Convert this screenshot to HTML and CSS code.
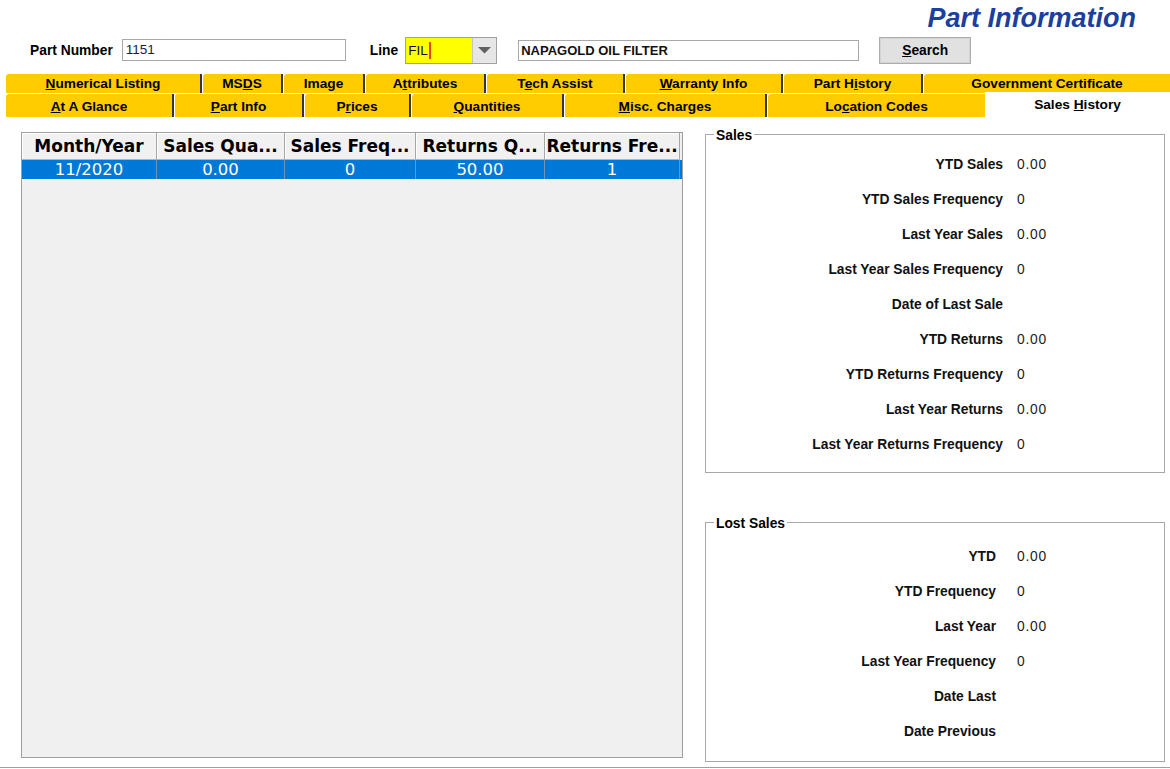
FILE: index.html
```html
<!DOCTYPE html>
<html>
<head>
<meta charset="utf-8">
<title>Part Information</title>
<link rel="stylesheet" href="styles.css">
</head>
<body>
<div class="app">
  <div class="title">Part Information</div>

  <div class="form-row">
    <span class="lbl">Part Number</span>
    <div class="field field-part">1151</div>
    <span class="lbl lbl-line">Line</span>
    <div class="combo">
      <div class="combo-field">FIL<span class="caret"></span></div>
      <div class="combo-btn">
        <svg width="13" height="7" viewBox="0 0 13 7"><path d="M0 0H13L6.5 6.5Z" fill="#606060"/></svg>
      </div>
    </div>
    <div class="field field-desc">NAPAGOLD OIL FILTER</div>
    <div class="btn"><u>S</u>earch</div>
  </div>

  <div class="tabs">
    <div class="tab-row row1">
      <div class="tab"><u>N</u>umerical Listing</div>
      <div class="tab">MS<u>D</u>S</div>
      <div class="tab">Ima<u>g</u>e</div>
      <div class="tab">A<u>t</u>tributes</div>
      <div class="tab">T<u>e</u>ch Assist</div>
      <div class="tab"><u>W</u>arranty Info</div>
      <div class="tab">Part H<u>i</u>story</div>
      <div class="tab last">Government Certificate</div>
    </div>
    <div class="tab-row row2">
      <div class="tab"><u>A</u>t A Glance</div>
      <div class="tab"><u>P</u>art Info</div>
      <div class="tab">P<u>r</u>ices</div>
      <div class="tab"><u>Q</u>uantities</div>
      <div class="tab"><u>M</u>isc. Charges</div>
      <div class="tab last">Lo<u>c</u>ation Codes</div>
      <div class="tab sel">Sales <u>H</u>istory</div>
    </div>
  </div>

  <div class="content">
    <div class="grid-table">
      <div class="thead">
        <div class="th">Month/Year</div>
        <div class="th">Sales Qua...</div>
        <div class="th">Sales Freq...</div>
        <div class="th">Returns Q...</div>
        <div class="th">Returns Fre...</div>
      </div>
      <div class="trow">
        <div class="td">11/2020</div>
        <div class="td">0.00</div>
        <div class="td">0</div>
        <div class="td">50.00</div>
        <div class="td">1</div>
      </div>
    </div>

    <div class="side">
      <fieldset class="group sales">
        <legend><span>Sales</span></legend>
        <div class="kv"><span class="k">YTD Sales</span><span class="v">0.00</span></div>
        <div class="kv"><span class="k">YTD Sales Frequency</span><span class="v">0</span></div>
        <div class="kv"><span class="k">Last Year Sales</span><span class="v">0.00</span></div>
        <div class="kv"><span class="k">Last Year Sales Frequency</span><span class="v">0</span></div>
        <div class="kv"><span class="k">Date of Last Sale</span><span class="v"></span></div>
        <div class="kv"><span class="k">YTD Returns</span><span class="v">0.00</span></div>
        <div class="kv"><span class="k">YTD Returns Frequency</span><span class="v">0</span></div>
        <div class="kv"><span class="k">Last Year Returns</span><span class="v">0.00</span></div>
        <div class="kv"><span class="k">Last Year Returns Frequency</span><span class="v">0</span></div>
      </fieldset>

      <fieldset class="group lost">
        <legend><span>Lost Sales</span></legend>
        <div class="kv"><span class="k">YTD</span><span class="v">0.00</span></div>
        <div class="kv"><span class="k">YTD Frequency</span><span class="v">0</span></div>
        <div class="kv"><span class="k">Last Year</span><span class="v">0.00</span></div>
        <div class="kv"><span class="k">Last Year Frequency</span><span class="v">0</span></div>
        <div class="kv"><span class="k">Date Last</span><span class="v"></span></div>
        <div class="kv"><span class="k">Date Previous</span><span class="v"></span></div>
      </fieldset>
    </div>
  </div>

  <div class="footer"></div>
</div>
</body>
</html>
```

FILE: styles.css
```css
body {
  margin: 0;
  background: #fff;
  font-family: "Liberation Sans", Arial, sans-serif;
  color: #000;
}

.app {
  width: 1170px;
  height: 769px;
  overflow: hidden;
}

/* Title */
.title {
  height: 30px;
  padding-top: 3px;
  padding-right: 34px;
  line-height: 30px;
  text-align: right;
  font-size: 27px;
  font-weight: bold;
  font-style: italic;
  color: #1b3fa0;
}

/* Form row */
.form-row {
  display: flex;
  align-items: center;
  height: 28px;
  margin-top: 3px;
  padding-left: 30px;
}

.lbl {
  font-weight: bold;
  font-size: 13.8px;
  white-space: nowrap;
}

.lbl-line {
  margin-left: 24px;
}

.field {
  box-sizing: border-box;
  height: 22px;
  border: 1px solid #a8a8a8;
  background: #fff;
  font-size: 13.5px;
  line-height: 20px;
  padding-left: 3px;
  white-space: nowrap;
}

.field-part {
  width: 224px;
  margin-left: 9px;
  color: #1c1c3c;
}

.field-desc {
  width: 341px;
  height: 21px;
  margin-left: 21px;
  padding-left: 2px;
  line-height: 19px;
  font-weight: bold;
  font-size: 13px;
  color: #111;
}

.combo {
  box-sizing: border-box;
  display: flex;
  width: 92px;
  height: 27px;
  margin-left: 7px;
  border: 1px solid #a0a0a0;
}

.combo-field {
  width: 64px;
  background: #ffff00;
  padding-left: 2px;
  font-size: 13.5px;
  line-height: 25px;
  color: #111;
  display: flex;
  align-items: center;
}

.caret {
  display: inline-block;
  width: 2px;
  height: 17px;
  margin-left: 1px;
  background: #e4411b;
}

.combo-btn {
  flex: 1;
  display: flex;
  align-items: center;
  justify-content: center;
  background: #e6e6e6;
  border-left: 1px solid #c4c4c4;
}

.btn {
  box-sizing: border-box;
  width: 92px;
  height: 27px;
  margin-left: 20px;
  border: 1px solid #adadad;
  box-shadow: inset 0 0 0 1px #d4d4d4;
  background: #e1e1e1;
  text-align: center;
  line-height: 25px;
  font-weight: bold;
  font-size: 13.8px;
}

/* Tabs */
.tabs {
  margin-top: 10px;
}

.tab-row {
  display: grid;
  padding-left: 6px;
}

.row1 {
  grid-template-columns: 197px 81px 82px 121px 139px 158px 140px 1fr;
  height: 19px;
}

.row2 {
  grid-template-columns: 169px 130px 107px 153px 203px 217px 1fr;
  height: 23px;
  margin-top: 1px;
}

.tab {
  box-sizing: border-box;
  margin-right: 1px;
  background: #ffcc00;
  border-right: 2px solid #353535;
  border-top-left-radius: 3px;
  text-align: center;
  font-weight: bold;
  font-size: 13.7px;
  white-space: nowrap;
  overflow: hidden;
}

.row1 .tab {
  line-height: 19px;
}

.row2 .tab {
  padding-top: 2px;
  line-height: 21px;
}

.tab.last {
  border-right: 0;
  margin-right: 0;
}

.row2 .tab.sel {
  background: #fff;
  border: 0;
  margin: -2px 0 0 0;
  padding-top: 0;
  line-height: 25px;
  border-radius: 0;
}

/* Content */
.content {
  box-sizing: border-box;
  display: flex;
  align-items: flex-start;
  height: 650px;
  padding: 9px 0 0 21px;
}

.grid-table {
  box-sizing: border-box;
  width: 662px;
  height: 626px;
  margin-top: 6px;
  border: 1px solid #a0a0a0;
  background: #f0f0f0;
}

.thead,
.trow {
  display: grid;
  grid-template-columns: 135px 128px 131px 129px 135px;
}

.thead {
  height: 27px;
}

.th {
  box-sizing: border-box;
  background: #f1f1f1;
  border-right: 1px solid #a6a6a6;
  border-bottom: 1px solid #b4b4b4;
  box-shadow: inset 1px 1px 0 #ffffff;
  font-family: "DejaVu Sans", Verdana, sans-serif;
  font-weight: bold;
  font-size: 17px;
  line-height: 27px;
  text-align: center;
  white-space: nowrap;
  overflow: hidden;
}

.trow {
  height: 19px;
  background: #0078d7;
}

.td {
  border-right: 1px solid #7191b5;
  color: #fff;
  font-family: "DejaVu Sans", Verdana, sans-serif;
  font-size: 16.5px;
  line-height: 19px;
  text-align: center;
  white-space: nowrap;
}

/* Side panels */
.side {
  width: 460px;
  margin-left: 22px;
}

.group {
  margin: 0;
  min-width: 0;
  border: 1px solid #a8a8a8;
}

.group legend {
  margin-left: 8px;
  padding: 0 2px;
  font-weight: bold;
  font-size: 13.8px;
  line-height: 16px;
}

.group legend span {
  position: relative;
  top: 2px;
}

.sales {
  padding: 5px 0 10px;
}

.lost {
  margin-top: 41px;
  padding: 9px 0 12px;
}

.kv {
  display: grid;
  grid-template-columns: 297px 1fr;
  column-gap: 14px;
  height: 35px;
  line-height: 35px;
}

.lost .kv {
  grid-template-columns: 290px 1fr;
  column-gap: 21px;
}

.k {
  text-align: right;
  font-weight: bold;
  font-size: 13.8px;
  color: #111;
  white-space: nowrap;
}

.v {
  font-size: 13.8px;
  letter-spacing: 0.8px;
  color: #222;
}

.footer {
  height: 1px;
  background: #a0a0a0;
}
```
